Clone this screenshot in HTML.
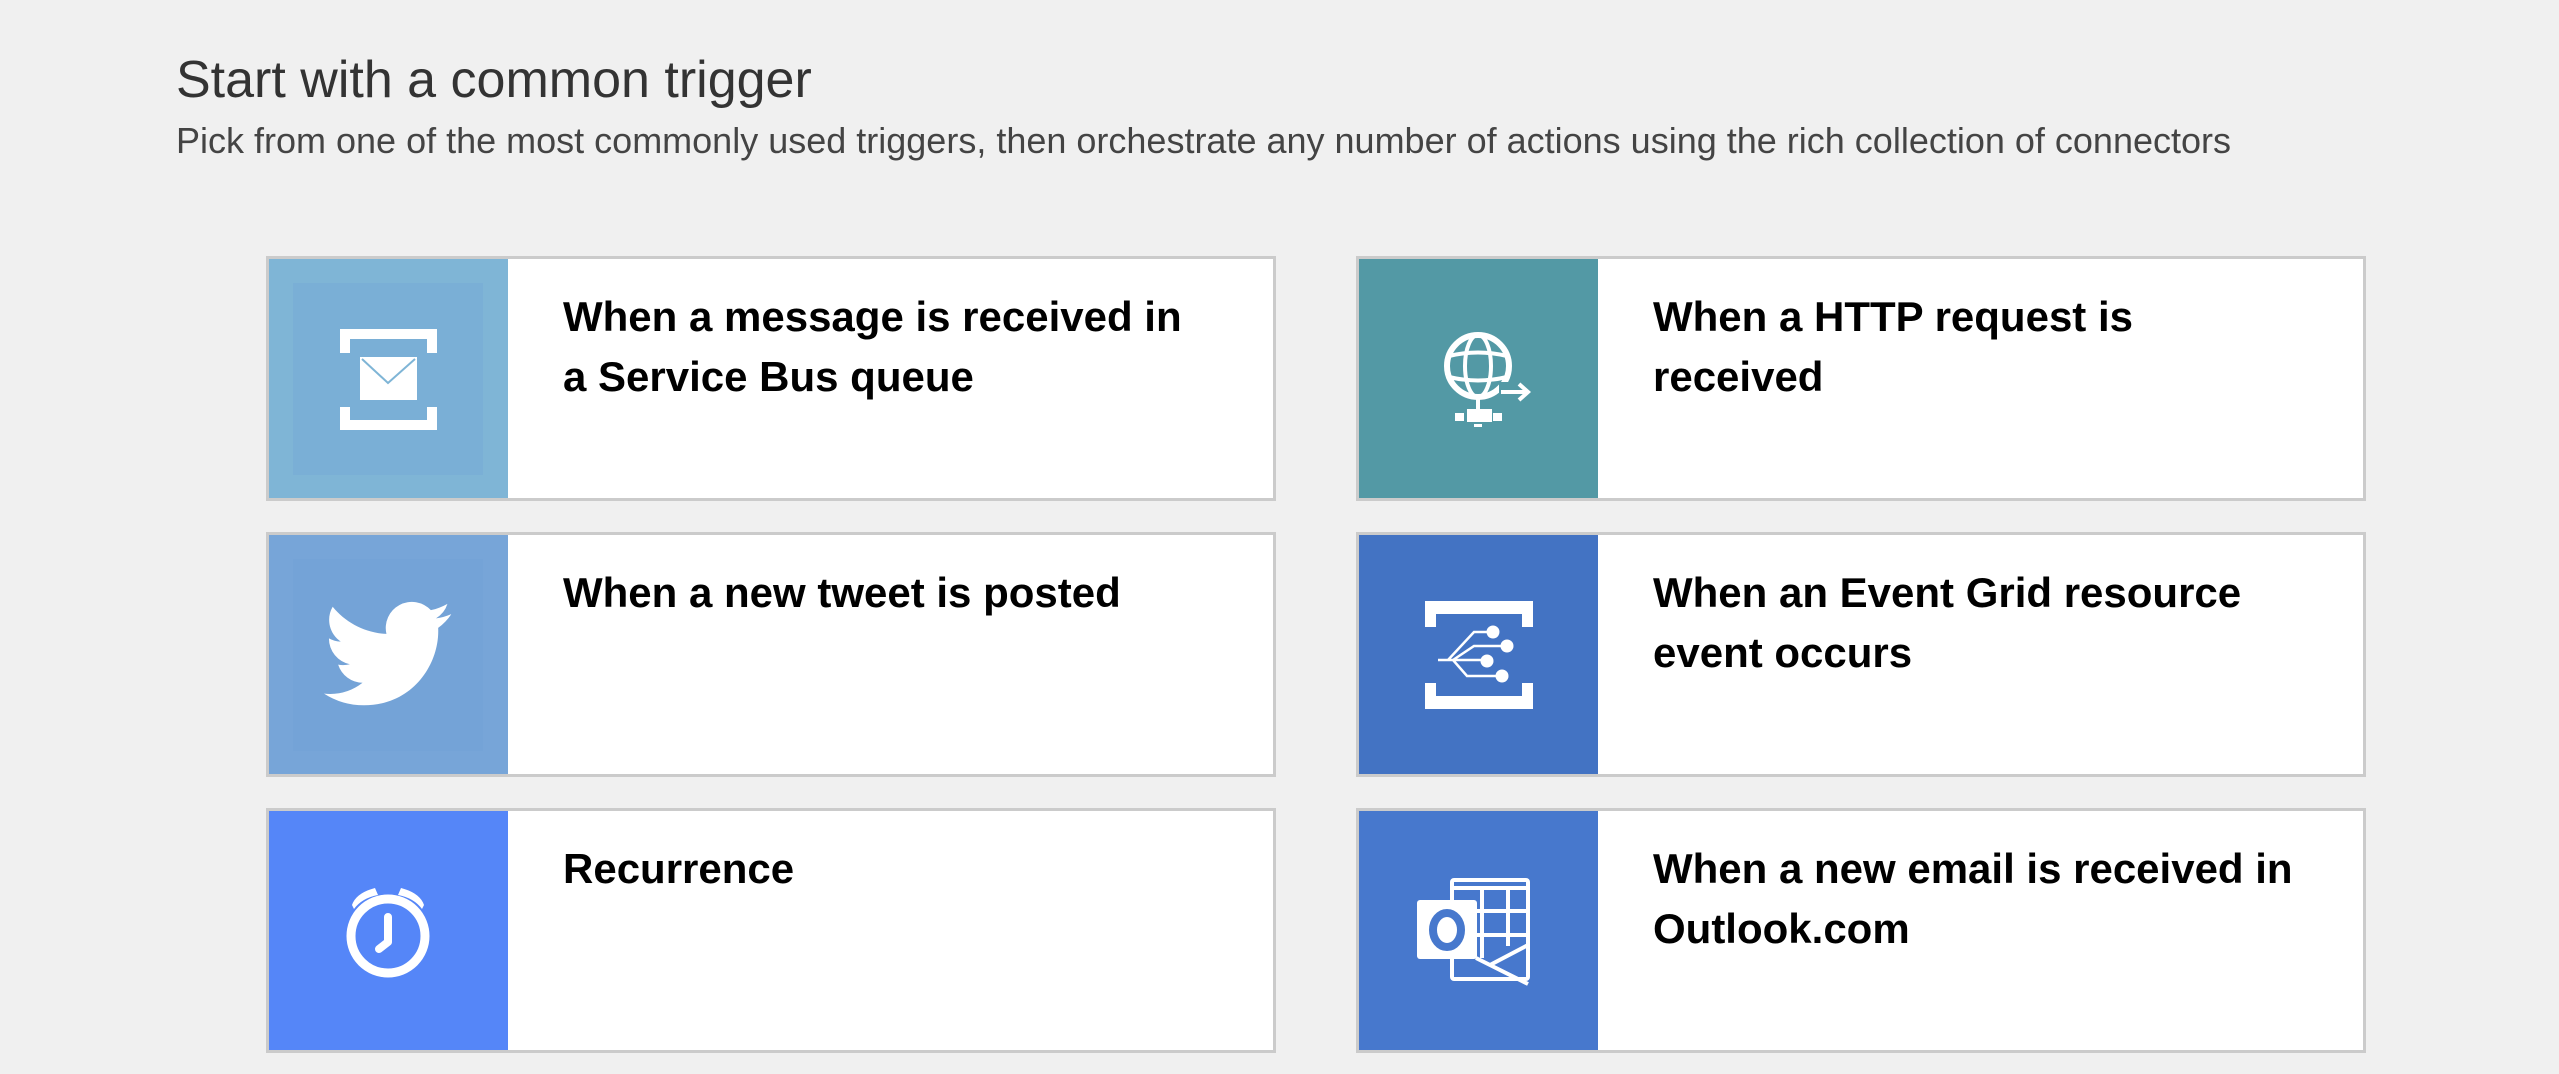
<!DOCTYPE html>
<html><head><meta charset="utf-8"><style>
html,body{margin:0;padding:0;}
body{width:2559px;height:1074px;background:#f0f0f0;position:relative;overflow:hidden;font-family:"Liberation Sans",sans-serif;}
h1{position:absolute;left:176px;top:50px;margin:0;font-weight:normal;font-size:52px;color:#333;white-space:nowrap;}
.sub{position:absolute;left:176px;top:120px;margin:0;font-size:36px;color:#444;white-space:nowrap;}
.card{position:absolute;width:1004px;height:239px;background:#fff;border:3px solid #cbcbcb;}
.pan{position:absolute;left:0;top:0;width:239px;height:239px;}
.pan svg{position:absolute;left:-3px;top:-3px;}
.t{position:absolute;left:294px;top:28px;width:648px;font-weight:bold;font-size:42px;line-height:60px;color:#000;}
</style></head><body>
<h1>Start with a common trigger</h1>
<p class="sub">Pick from one of the most commonly used triggers, then orchestrate any number of actions using the rich collection of connectors</p>

<div class="card" style="left:266px;top:256px">
 <div class="pan" style="background:#7fb5d6"><svg width="242" height="245">
  <rect x="27" y="27" width="190" height="192" fill="#7aafd6"/>
  <path d="M74 97V73H171V97H161V83H84V97Z" fill="#fff"/>
  <path d="M74 151V174H171V151H161V164H84V151Z" fill="#fff"/>
  <rect x="94" y="101" width="57" height="43" fill="#fff"/>
  <path d="M96 103L122 127L149 103" fill="none" stroke="#7fb5d6" stroke-width="2"/>
 </svg></div>
 <div class="t">When a message is received in a Service Bus queue</div>
</div>

<div class="card" style="left:1356px;top:256px">
 <div class="pan" style="background:#5399a5"><svg width="242" height="245">
  <circle cx="122" cy="110" r="31" fill="none" stroke="#fff" stroke-width="6"/>
  <ellipse cx="122" cy="110" rx="13" ry="31" fill="none" stroke="#fff" stroke-width="4"/>
  <path d="M93 100Q122 93 151 100M93 121Q122 128 151 121" fill="none" stroke="#fff" stroke-width="4"/>
  <rect x="143" y="126" width="14" height="14" fill="#5399a5"/>
  <path d="M145 136H172M163 128L172 136L163 144" fill="none" stroke="#fff" stroke-width="4"/>
  <rect x="120" y="141" width="4" height="12" fill="#fff"/>
  <rect x="111" y="153" width="25" height="13" fill="#fff"/>
  <rect x="99" y="157" width="9" height="8" fill="#fff"/>
  <rect x="137" y="157" width="9" height="8" fill="#fff"/>
  <rect x="118" y="168" width="8" height="3" fill="#fff"/>
 </svg></div>
 <div class="t">When a HTTP request is received</div>
</div>

<div class="card" style="left:266px;top:532px">
 <div class="pan" style="background:#77a5d8"><svg width="242" height="245">
  <rect x="27" y="27" width="190" height="192" fill="#74a3d7"/>
  <path transform="translate(58,58) scale(5.3)" fill="#fff" d="M23.953 4.57a10 10 0 01-2.825.775 4.958 4.958 0 002.163-2.723c-.951.555-2.005.959-3.127 1.184a4.92 4.920 0 00-8.384 4.482C7.69 8.095 4.067 6.13 1.64 3.162a4.822 4.822 0 00-.666 2.475c0 1.71.87 3.213 2.188 4.096a4.904 4.904 0 01-2.228-.616v.06a4.923 4.923 0 003.946 4.827 4.996 4.996 0 01-2.212.085 4.936 4.936 0 004.604 3.417 9.867 9.867 0 01-6.102 2.105c-.39 0-.779-.023-1.17-.067a13.995 13.995 0 007.557 2.209c9.053 0 13.998-7.496 13.998-13.985 0-.21 0-.42-.015-.63A9.935 9.935 0 0024 4.59z"/>
 </svg></div>
 <div class="t">When a new tweet is posted</div>
</div>

<div class="card" style="left:1356px;top:532px">
 <div class="pan" style="background:#4373c3"><svg width="242" height="245">
  <path d="M69 95V69H177V95H166V82H80V95Z" fill="#fff"/>
  <path d="M69 151V177H177V151H166V164H80V151Z" fill="#fff"/>
  <g fill="none" stroke="#fff" stroke-width="2.5">
   <path d="M82 128H130M92 128L118 100H137M97 128L118 114H151M97 128L111 144H146"/>
  </g>
  <g fill="#fff"><circle cx="137" cy="100" r="6.5"/><circle cx="151" cy="114" r="6.5"/><circle cx="131" cy="129" r="6.5"/><circle cx="146" cy="144" r="6.5"/></g>
 </svg></div>
 <div class="t">When an Event Grid resource event occurs</div>
</div>

<div class="card" style="left:266px;top:808px">
 <div class="pan" style="background:#5586f8"><svg width="242" height="245">
  <circle cx="122" cy="128" r="37" fill="none" stroke="#fff" stroke-width="9"/>
  <path d="M122 109V134L113 141" fill="none" stroke="#fff" stroke-width="8" stroke-linecap="round" stroke-linejoin="round"/>
  <path d="M86 97Q90 85 109 80L112 87Q96 90 88 101Z" fill="#fff"/>
  <path d="M158 97Q154 85 135 80L132 87Q148 90 156 101Z" fill="#fff"/>
 </svg></div>
 <div class="t">Recurrence</div>
</div>

<div class="card" style="left:1356px;top:808px">
 <div class="pan" style="background:#4778cd"><svg width="242" height="245">
  <g fill="none" stroke="#fff" stroke-width="4">
   <rect x="96" y="72" width="76" height="99" rx="2"/>
   <path d="M96 80H172M126 80V150M152 80V138M120 103H172M120 127H172"/>
   <path d="M120 150L172 176M134 157L172 137"/>
  </g>
  <rect x="61" y="92" width="60" height="59" rx="3" fill="#fff"/>
  <ellipse cx="91" cy="122" rx="14" ry="17" fill="none" stroke="#4778cd" stroke-width="8"/>
 </svg></div>
 <div class="t">When a new email is received in Outlook.com</div>
</div>
</body></html>
